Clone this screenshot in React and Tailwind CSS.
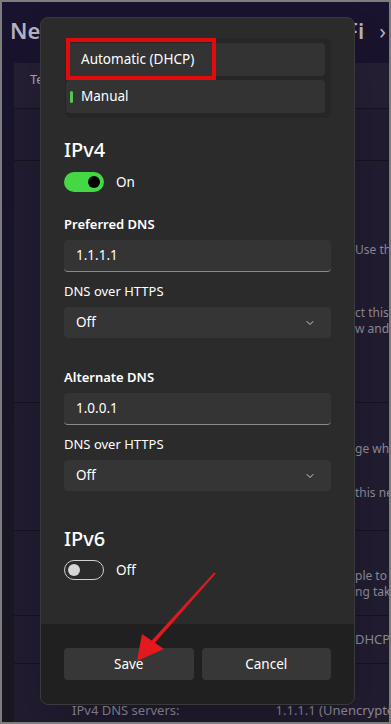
import { ChevronDown } from 'lucide-react'

const Toggle = ({ on }) =>
  on ? (
    <div className="w-10 h-5 rounded-full bg-[#45d845] flex items-center justify-end pr-[4px]">
      <div className="w-3 h-3 rounded-full bg-black" />
    </div>
  ) : (
    <div className="w-10 h-5 rounded-full border border-[#cfcfcf] flex items-center justify-start pl-[3px]">
      <div className="w-3 h-3 rounded-full bg-[#d6d6d6]" />
    </div>
  )

const TextBox = ({ value }) => (
  <div className="mt-[6px] h-[32px] rounded bg-[#343434] border-b border-[#8a8a8a] flex items-center pl-3 text-[13.5px] text-white">
    {value}
  </div>
)

const SelectBox = ({ value }) => (
  <div className="mt-[6px] h-[31px] rounded bg-[#353535] flex items-center justify-between pl-3 pr-[15px] text-[13.5px] text-white">
    <span>{value}</span>
    <ChevronDown className="w-[12px] h-[12px] text-[#cfcfcf]" strokeWidth={2} />
  </div>
)

const BgText = ({ children, className = '' }) => (
  <p className={`ml-[341px] whitespace-nowrap text-[12px] leading-[16px] text-[#8d8a96] ${className}`}>{children}</p>
)

export default function App() {
  return (
    <div className="relative w-[391px] h-[724px] bg-[#7d7d7d] p-[2px] font-['Noto_Sans',sans-serif]">
      <div className="relative w-full h-full overflow-hidden bg-gradient-to-b from-[#19132f] to-[#1b1822]">
        {/* page behind the dialog */}
        <div className="h-[61px] pt-[14px] pl-[8px] pr-[3px] flex justify-between text-[22px] leading-[28px] font-semibold text-[#b4b1c0]">
          <span>Network &amp; internet</span>
          <span>
            Wi-Fi<span className="ml-[15px] font-normal">›</span>
          </span>
        </div>
        <div className="ml-[12px] bg-[#211c30] flex flex-col">
          <div className="h-[45px] pt-[7px] pl-[16px] text-[13px] leading-[18px] text-[#aaa7b3] bg-[#241f33]">Tethering</div>
          <div className="h-[52px] border-t border-[#16121f]" />
          <div className="h-[242px] border-t border-[#16121f] pt-[81px]">
            <BgText>Use this network</BgText>
            <BgText className="mt-[47px]">ct this network</BgText>
            <BgText>w and connect</BgText>
          </div>
          <div className="h-[128px] border-t border-[#16121f] pt-[38px]">
            <BgText>ge when connected</BgText>
            <BgText className="mt-[28px] text-[#6aa05a]">this network</BgText>
          </div>
          <div className="h-[85px] border-t border-[#16121f] pt-[37px]">
            <BgText className="leading-[15px]">ple to track</BgText>
            <BgText className="leading-[15px]">ng takes effect</BgText>
          </div>
          <div className="h-[48px] border-t border-[#16121f] pt-[14px]">
            <BgText className="text-[13px] leading-[18px]">DHCP)</BgText>
          </div>
          <div className="h-[61px] border-t border-[#16121f] pt-[37px] flex text-[13px] leading-[18px] text-[#8d8a96] whitespace-nowrap">
            <span className="ml-[58px]">IPv4 DNS servers:</span>
            <span className="ml-[96px]">1.1.1.1 (Unencrypted)</span>
          </div>
        </div>

        {/* dialog */}
        <div className="absolute left-[38px] top-[15px] w-[315px] h-[688px] rounded-lg bg-[#2b2b2b] border border-[#3a3a3a] flex flex-col overflow-hidden shadow-2xl text-white">
          <div className="flex-1 pt-[20px] pl-[23px] pr-[23px] flex flex-col">
            <div className="relative ml-px w-[266px] rounded-md bg-[#262626] pt-[5px] pb-[5px] pl-[1px] pr-[6px] flex flex-col gap-[4px]">
              <div className="h-[33px] rounded bg-[#333333] flex items-center pl-[15px] text-[13.5px]">Automatic (DHCP)</div>
              <div className="relative h-[33px] rounded bg-[#333333] flex items-center pl-[15px] text-[13.5px]">
                <div className="absolute left-[4px] top-[11px] w-[3px] h-[12px] rounded-full bg-[#53c653]" />
                Manual
              </div>
              <div className="absolute left-[1px] top-0 w-[150px] h-[42px] border-[4px] border-[#e10b0b]" />
            </div>

            <h2 className="mt-[18px] text-[20px] leading-[28px] font-medium">IPv4</h2>
            <div className="mt-[8px] h-5 flex items-center gap-3 text-[13.5px]">
              <Toggle on />
              <span>On</span>
            </div>

            <p className="mt-[22px] text-[13px] leading-5 font-semibold">Preferred DNS</p>
            <TextBox value="1.1.1.1" />
            <p className="mt-[9px] text-[13px] leading-5">DNS over HTTPS</p>
            <SelectBox value="Off" />

            <p className="mt-[29px] text-[13px] leading-5 font-semibold">Alternate DNS</p>
            <TextBox value="1.0.0.1" />
            <p className="mt-[9px] text-[13px] leading-5">DNS over HTTPS</p>
            <SelectBox value="Off" />

            <h2 className="mt-[34px] text-[20px] leading-[28px] font-medium">IPv6</h2>
            <div className="mt-[7px] h-5 flex items-center gap-3 text-[13.5px]">
              <Toggle on={false} />
              <span>Off</span>
            </div>
          </div>
          <div className="h-[80px] bg-[#202020] pt-[24px] px-[23px] flex gap-2">
            <button className="flex-1 h-8 rounded bg-[#373737] text-[13.5px] text-white">Save</button>
            <button className="flex-1 h-8 rounded bg-[#373737] text-[13.5px] text-white">Cancel</button>
          </div>
        </div>
      </div>

      {/* red annotation arrow */}
      <svg className="absolute left-0 top-0 w-[391px] h-[724px] pointer-events-none" viewBox="0 0 391 724">
        <polygon points="215.8,573.6 214.2,572.4 151.5,640.7 154.5,643.3" fill="#e3191e" />
        <polygon points="137,661 142,634 164,649" fill="#e3191e" />
      </svg>
    </div>
  )
}
